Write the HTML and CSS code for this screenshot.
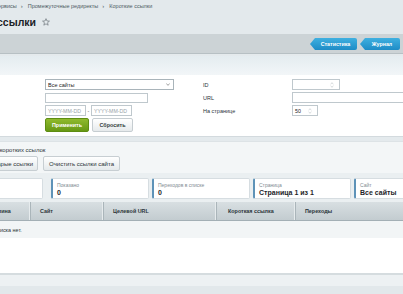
FILE: index.html
```html
<!DOCTYPE html>
<html lang="ru">
<head>
<meta charset="utf-8">
<title>Короткие ссылки</title>
<link rel="stylesheet" href="styles.css">
</head>
<body>
<div class="page">
  <header class="top">
    <nav class="crumbs">
      <span class="crumb crumb-first">Сервисы</span><span class="sep">›</span>
      <span class="crumb">Промежуточные редиректы</span><span class="sep">›</span>
      <span class="crumb">Короткие ссылки</span>
    </nav>
    <div class="title-row">
      <h1 class="title">Короткие ссылки</h1>
      <svg class="star" viewBox="0 0 10 10" width="8" height="8"><path d="M5 0.8 L6.2 3.7 L9.3 3.9 L6.9 5.9 L7.7 9 L5 7.3 L2.3 9 L3.1 5.9 L0.7 3.9 L3.8 3.7 Z" fill="none" stroke="#6f787d" stroke-width="0.9" stroke-linejoin="round"/></svg>
    </div>
  </header>

  <div class="toolbar">
    <a class="tbtn tbtn-stat">Статистика</a>
    <a class="tbtn tbtn-log">Журнал</a>
  </div>

  <section class="filter">
    <div class="filter-head"></div>
    <div class="filter-body">
      <div class="fcell"></div>
      <div class="fcell">
        <div class="select"><span>Все сайты</span><svg class="chev" viewBox="0 0 6 4" width="4" height="3"><path d="M0.5 0.8 L3 3.2 L5.5 0.8" fill="none" stroke="#555" stroke-width="0.9"/></svg></div>
      </div>
      <div class="flabel">ID</div>
      <div class="fcell"><div class="input input-id"><span class="spin"><svg viewBox="0 0 6 9" width="4" height="6"><path d="M1 3.5 L3 1 L5 3.5 M1 5.5 L3 8 L5 5.5" fill="none" stroke="#b5bcc0" stroke-width="0.8"/></svg></span></div></div>

      <div class="fcell"></div>
      <div class="fcell"><div class="input input-wide"></div></div>
      <div class="flabel">URL</div>
      <div class="fcell"><div class="input input-url"></div></div>

      <div class="fcell"></div>
      <div class="fcell dates">
        <div class="input input-date">YYYY-MM-DD</div><span class="dash">-</span><div class="input input-date">YYYY-MM-DD</div>
      </div>
      <div class="flabel">На странице</div>
      <div class="fcell"><div class="input input-num">50<span class="spin"><svg viewBox="0 0 6 9" width="4" height="6"><path d="M1 3.5 L3 1 L5 3.5 M1 5.5 L3 8 L5 5.5" fill="none" stroke="#b5bcc0" stroke-width="0.8"/></svg></span></div></div>

      <div class="fcell"></div>
      <div class="fcell btns">
        <a class="btn btn-green">Применить</a><a class="btn btn-light">Сбросить</a>
      </div>
      <div class="flabel"></div>
      <div class="fcell"></div>
    </div>
  </section>

  <section class="list">
    <div class="list-title">Список коротких ссылок</div>
    <div class="list-actions">
      <a class="abtn abtn-first">Удалить старые ссылки</a>
      <a class="abtn">Очистить ссылки сайта</a>
    </div>
    <div class="stats">
      <div class="card card-first"><div class="card-label">Всего</div><div class="card-value">0</div></div>
      <div class="card"><div class="card-label">Показано</div><div class="card-value">0</div></div>
      <div class="card"><div class="card-label">Переходов в списке</div><div class="card-value">0</div></div>
      <div class="card"><div class="card-label">Страница</div><div class="card-value">Страница 1 из 1</div></div>
      <div class="card"><div class="card-label">Сайт</div><div class="card-value">Все сайты</div></div>
    </div>
    <div class="grid-head">
      <div class="th th-first">Длина</div>
      <div class="th">Сайт</div>
      <div class="th">Целевой URL</div>
      <div class="th th-short">Короткая ссылка</div>
      <div class="th">Переходы</div>
    </div>
    <div class="grid-empty"><span class="empty-text">Элементов списка нет.</span></div>
    <div class="grid-space"></div>
  </section>

  <div class="footer">
    <div class="footer-band"></div>
  </div>
</div>
</body>
</html>
```

FILE: styles.css
```css
* { box-sizing: border-box; }

html, body {
  margin: 0;
  padding: 0;
}

body {
  width: 403px;
  height: 294px;
  overflow: hidden;
  background: #e4eaed;
  font-family: "Liberation Sans", Arial, sans-serif;
  color: #222;
}

.page {
  width: 403px;
}

/* ---------- top ---------- */
.top {
  height: 34px;
  background: #e3e9ec;
  padding-top: 3px;
}

.crumbs {
  display: flex;
  align-items: center;
  white-space: nowrap;
  font-size: 5.5px;
  line-height: 7px;
  color: #4d5b63;
}

.crumb-first { margin-left: -6px; }

.sep {
  margin: 0 5px 0 4px;
  font-size: 6px;
}

.title-row {
  display: flex;
  align-items: center;
  margin-top: 5px;
  height: 14px;
}

.title {
  margin: 0 0 0 -54px;
  font-size: 10.5px;
  font-weight: bold;
  color: #1b2226;
  white-space: nowrap;
  line-height: 14px;
}

.star {
  margin-left: 6px;
  margin-top: -1px;
}

/* ---------- toolbar ---------- */
.toolbar {
  height: 20px;
  background: #ccd3d6;
  border-bottom: 1px solid #b7c0c4;
  display: flex;
  justify-content: flex-end;
  align-items: flex-start;
  padding: 4px 3px 0 0;
  gap: 3px;
}

.tbtn {
  display: flex;
  align-items: center;
  justify-content: center;
  height: 12px;
  padding-left: 4px;
  background: linear-gradient(#3fb0e0, #1e8cc6);
  color: #fff;
  font-size: 5.3px;
  font-weight: bold;
  border-radius: 0 2px 2px 0;
  clip-path: polygon(5px 0, 100% 0, 100% 100%, 5px 100%, 0 50%);
}

.tbtn-stat { width: 47px; }
.tbtn-log { width: 40px; }

/* ---------- filter ---------- */
.filter {
  margin-top: 2px;
  background: #fff;
  border-bottom: 1px solid #d3dade;
}

.filter-head {
  height: 19px;
  background: linear-gradient(#e4ecf0, #f2f6f8);
}

.filter-body {
  display: grid;
  grid-template-columns: 45px 158px 89px 1fr;
  grid-template-rows: 11px 11px 11px 14px;
  row-gap: 2px;
  padding: 4px 0 4px;
}

.fcell {
  display: flex;
  align-items: center;
}

.flabel {
  font-size: 5.5px;
  color: #2c3439;
  display: flex;
  align-items: center;
  white-space: nowrap;
}

.select {
  width: 129px;
  height: 11px;
  border: 1px solid #a9b4ba;
  background: #fff;
  font-size: 5.5px;
  color: #222;
  display: flex;
  align-items: center;
  justify-content: space-between;
  padding: 0 2px 0 2px;
}

.chev { margin-right: 1px; }

.input {
  height: 11px;
  border: 1px solid #bfc8cd;
  background: #fff;
  font-size: 5.3px;
  color: #222;
  display: flex;
  align-items: center;
  padding: 0 2px;
}

.input-wide { width: 103px; height: 10px; }
.input-id { width: 48px; justify-content: flex-end; }
.input-url { width: 130px; }
.input-num { width: 26px; justify-content: space-between; }

.spin {
  display: flex;
  align-items: center;
  padding-right: 3px;
}

.input-date {
  width: 41px;
  color: #99a3a9;
  font-size: 5.2px;
}

.dash {
  width: 5px;
  text-align: center;
  font-size: 5.5px;
  color: #555;
}

.btns {
  gap: 3px;
  align-items: stretch;
}

.btn {
  display: flex;
  align-items: center;
  justify-content: center;
  font-size: 5.4px;
  font-weight: bold;
  border-radius: 2px;
}

.btn-green {
  width: 44px;
  background: linear-gradient(#8fba2d, #679814);
  border: 1px solid #5e8d12;
  color: #fff;
}

.btn-light {
  width: 41px;
  background: linear-gradient(#ffffff, #e6eaec);
  border: 1px solid #c6cdd1;
  color: #333c41;
}

/* ---------- list ---------- */
.list {
  margin-top: 4px;
  background: #f3f6f7;
  border-top: 1px solid #dde3e6;
}

.list-title {
  padding-top: 4px;
  font-size: 6px;
  line-height: 8px;
  color: #2a3237;
  margin-left: -22px;
  white-space: nowrap;
}

.list-actions {
  display: flex;
  gap: 5px;
  margin-top: 2px;
  height: 15px;
}

.abtn {
  display: flex;
  align-items: center;
  justify-content: center;
  height: 15px;
  padding: 0 5px;
  font-size: 6px;
  color: #2a3237;
  background: linear-gradient(#ffffff, #e4e9eb);
  border: 1px solid #c7ced2;
  border-radius: 2px;
  white-space: nowrap;
}

.abtn-first {
  margin-left: -39px;
  width: 77px;
  justify-content: flex-end;
  padding-right: 4px;
}

.abtn:not(.abtn-first) { width: 77px; }

.stats {
  display: flex;
  gap: 3px;
  margin-top: 2px;
  padding: 5px 0 3px;
  background: #eaeff1;
}

.card {
  flex: none;
  width: 98px;
  height: 21px;
  background: #fff;
  border: 1px solid #d6dde1;
  border-left: 2px solid #5e93b8;
  border-radius: 2px;
  padding: 3px 4px 0;
}

.card-first {
  margin-left: -55px;
  margin-right: 5px;
}

.card-label {
  font-size: 5px;
  line-height: 6px;
  color: #7f8b92;
  white-space: nowrap;
}

.card-value {
  font-size: 7px;
  line-height: 9px;
  font-weight: bold;
  color: #1e2529;
  white-space: nowrap;
}

.grid-head {
  display: grid;
  grid-template-columns: 60px 73px 113px 79px 110px;
  margin-left: -29px;
  height: 19px;
  background: linear-gradient(#d8dfe2, #c3ccd0);
  border-bottom: 1px solid #a3afb5;
}

.th {
  display: flex;
  align-items: center;
  padding-left: 9px;
  font-size: 5.4px;
  font-weight: bold;
  color: #2b3439;
  border-right: 1px solid #aab5ba;
  box-shadow: inset -2px 0 0 -1px #e6ebed;
  white-space: nowrap;
}

.th-first { padding-left: 23px; }
.th-short { padding-left: 11px; }
.th:last-child { border-right: none; box-shadow: none; }

.grid-empty {
  height: 17px;
  background: #f2f5f6;
  display: flex;
  align-items: center;
}

.empty-text {
  margin-left: -35px;
  font-size: 5.4px;
  color: #2b3439;
  white-space: nowrap;
}

.grid-space {
  height: 35px;
  background: #fff;
}

/* ---------- footer ---------- */
.footer {
  border-top: 2px solid #d5dcdf;
  background: #edf1f3;
  height: 24px;
  padding-top: 11px;
}

.footer-band {
  height: 12px;
  background: #e2e8eb;
}
```
